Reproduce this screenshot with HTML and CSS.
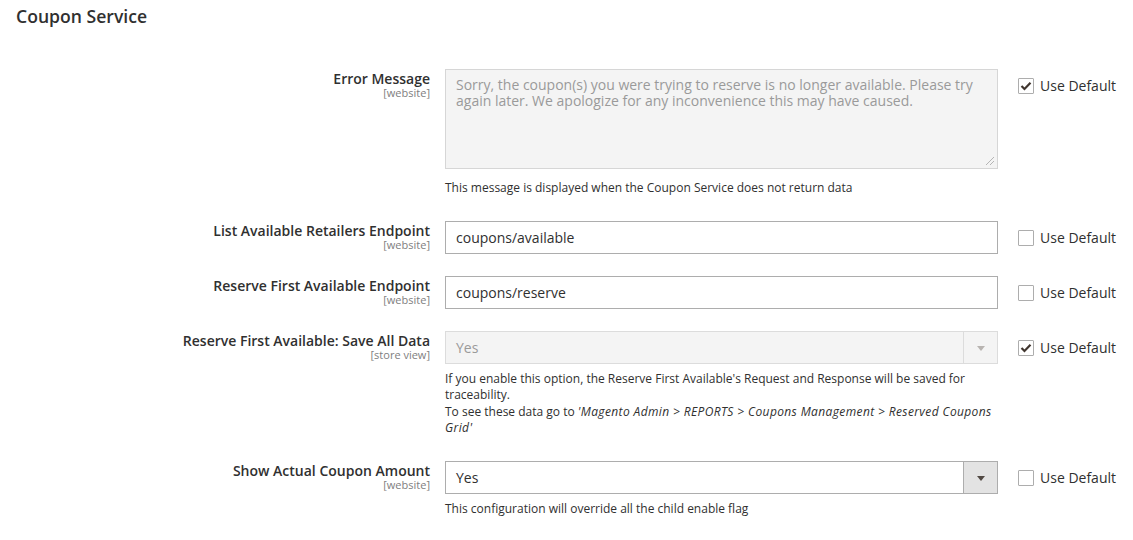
FILE: index.html
```html
<!DOCTYPE html>
<html>
<head>
<meta charset="utf-8">
<link rel="stylesheet" href="styles.css">
</head>
<body>
<div class="section">
  <h2 class="section-title">Coupon Service</h2>
  <div class="fields">
    <div class="field">
      <div class="label"><span class="label-text">Error Message</span><span class="scope">[website]</span></div>
      <div class="control">
        <div class="textarea disabled">Sorry, the coupon(s) you were trying to reserve is no longer available. Please try again later. We apologize for any inconvenience this may have caused.<svg class="grip" width="12" height="12" viewBox="0 0 12 12"><path d="M11 3 L3 11 M11 7 L7 11" stroke="#b5b5b5" stroke-width="1" fill="none"/></svg></div>
        <div class="note">This message is displayed when the Coupon Service does not return data</div>
      </div>
      <div class="use-default"><span class="cb checked"><svg width="12" height="10" viewBox="0 0 12 10"><path d="M1.5 5 L4.5 8 L10.5 1.8" stroke="#41362f" stroke-width="2.2" fill="none"/></svg></span><span>Use Default</span></div>
    </div>

    <div class="field">
      <div class="label"><span class="label-text">List Available Retailers Endpoint</span><span class="scope">[website]</span></div>
      <div class="control">
        <div class="input">coupons/available</div>
      </div>
      <div class="use-default"><span class="cb"></span><span>Use Default</span></div>
    </div>

    <div class="field">
      <div class="label"><span class="label-text">Reserve First Available Endpoint</span><span class="scope">[website]</span></div>
      <div class="control">
        <div class="input">coupons/reserve</div>
      </div>
      <div class="use-default"><span class="cb"></span><span>Use Default</span></div>
    </div>

    <div class="field">
      <div class="label"><span class="label-text">Reserve First Available: Save All Data</span><span class="scope">[store view]</span></div>
      <div class="control">
        <div class="select disabled"><span class="select-value">Yes</span><span class="select-arrow"><span class="tri"></span></span></div>
        <div class="note">If you enable this option, the Reserve First Available's Request and Response will be saved for traceability.<br>To see these data go to <em>'Magento Admin &gt; REPORTS &gt; Coupons Management &gt; Reserved Coupons Grid'</em></div>
      </div>
      <div class="use-default"><span class="cb checked"><svg width="12" height="10" viewBox="0 0 12 10"><path d="M1.5 5 L4.5 8 L10.5 1.8" stroke="#41362f" stroke-width="2.2" fill="none"/></svg></span><span>Use Default</span></div>
    </div>

    <div class="field">
      <div class="label"><span class="label-text">Show Actual Coupon Amount</span><span class="scope">[website]</span></div>
      <div class="control">
        <div class="select"><span class="select-value">Yes</span><span class="select-arrow"><span class="tri"></span></span></div>
        <div class="note">This configuration will override all the child enable flag</div>
      </div>
      <div class="use-default"><span class="cb"></span><span>Use Default</span></div>
    </div>
  </div>
</div>
</body>
</html>
```

FILE: styles.css
```css
* { box-sizing: border-box; }
html, body { margin: 0; padding: 0; background: #fff; }
body {
  font-family: "Open Sans", "Noto Sans", sans-serif;
  color: #303030;
  font-size: 14px;
}
.section-title {
  margin: 0;
  padding: 4px 0 0 16px;
  font-size: 17.6px;
  font-weight: 600;
  line-height: 24px;
  color: #303030;
}
.fields { padding-top: 41px; }
.field {
  display: grid;
  grid-template-columns: 430px 553px auto;
  column-gap: 15px;
  margin-bottom: 22px;
}
.label {
  display: flex;
  flex-direction: column;
  align-items: flex-end;
  text-align: right;
}
.label-text {
  font-weight: 600;
  font-size: 14px;
  line-height: 20px;
  color: #303030;
}
.scope {
  font-size: 11px;
  line-height: 8px;
  color: #808080;
}
.textarea {
  position: relative;
  height: 100px;
  border: 1px solid #d6d6d6;
  background: #f4f4f4;
  color: #9a9a9a;
  padding: 7px 10px 5px;
  font-size: 14px;
  line-height: 16px;
  margin-bottom: 11px;
}
.grip { position: absolute; right: 2px; bottom: 2px; }
.input {
  height: 33px;
  border: 1px solid #adadad;
  background: #fff;
  padding: 0 10px;
  line-height: 31px;
  font-size: 14px;
  color: #303030;
}
.select {
  display: flex;
  height: 33px;
  border: 1px solid #adadad;
  background: #fff;
}
.select-value {
  flex: 1;
  padding: 0 10px;
  line-height: 31px;
  color: #303030;
}
.select-arrow {
  width: 34px;
  border-left: 1px solid #adadad;
  background: #e3e3e3;
  display: flex;
  align-items: center;
  justify-content: center;
}
.tri {
  width: 0; height: 0;
  border-left: 4px solid transparent;
  border-right: 4px solid transparent;
  border-top: 5px solid #514943;
  margin-top: 1px;
}
.select.disabled {
  border-color: #dcdcdc;
  background: #f4f4f4;
}
.select.disabled .select-value { color: #9a9a9a; }
.select.disabled .select-arrow {
  background: #f4f4f4;
  border-left-color: #dcdcdc;
}
.select.disabled .tri { border-top-color: #b8b4b1; }
.note {
  font-size: 12px;
  line-height: 16.2px;
  margin-top: 7px;
  margin-bottom: 3px;
  color: #303030;
}
.note em { font-style: italic; letter-spacing: 0.38px; }
.use-default {
  display: flex;
  align-items: center;
  margin-left: 5px;
  height: 33px;
  align-self: start;
  font-size: 14px;
  line-height: 18px;
  color: #303030;
}
.cb {
  width: 16px; height: 16px;
  border: 1px solid #adadad;
  border-radius: 1px;
  background: #fff;
  margin-right: 6px;
  display: flex;
  align-items: center;
  justify-content: center;
}
```
